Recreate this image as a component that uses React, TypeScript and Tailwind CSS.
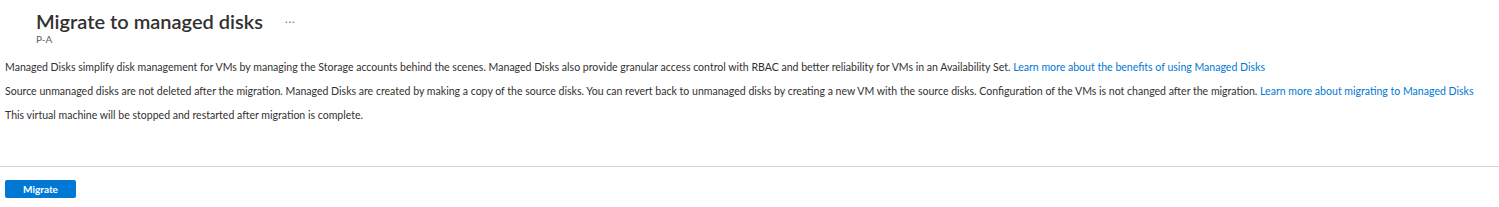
export default function App() {
  const font = { fontFamily: 'Lato, "Open Sans", sans-serif' };
  return (
    <div className="w-[1499px] h-[207px] bg-white text-[#323130] overflow-hidden" style={font}>
      <div className="pl-[36px] pt-[9px] flex items-start">
        <div>
          <h1 className="text-[20px] font-semibold leading-[24px] text-[#323130]">Migrate to managed disks</h1>
          <div className="text-[10px] leading-[12px] text-[#605e5c]">P-A</div>
        </div>
        <div className="ml-[22px] mt-[4px] text-[11px] leading-[12px] text-[#605e5c] tracking-[1px]">...</div>
      </div>
      <div className="px-[5px] pt-[10px] text-[10.56px] leading-[24px] text-[#323130] whitespace-nowrap">
        <p>
          Managed Disks simplify disk management for VMs by managing the Storage accounts behind the scenes. Managed Disks also provide granular access control with RBAC and better reliability for VMs in an Availability Set.{' '}
          <a className="text-[#0078d4]">Learn more about the benefits of using Managed Disks</a>
        </p>
        <p>
          Source unmanaged disks are not deleted after the migration. Managed Disks are created by making a copy of the source disks. You can revert back to unmanaged disks by creating a new VM with the source disks. Configuration of the VMs is not changed after the migration.{' '}
          <a className="text-[#0078d4]">Learn more about migrating to Managed Disks</a>
        </p>
        <p>This virtual machine will be stopped and restarted after migration is complete.</p>
      </div>
      <div className="mt-[39px] border-t border-[#d6d6d6]" />
      <div className="px-[5px] pt-[13px] flex">
        <button className="w-[71px] h-[18px] bg-[#0078d4] text-white text-[10px] font-bold rounded-[2px] leading-[18px]">Migrate</button>
      </div>
    </div>
  );
}
